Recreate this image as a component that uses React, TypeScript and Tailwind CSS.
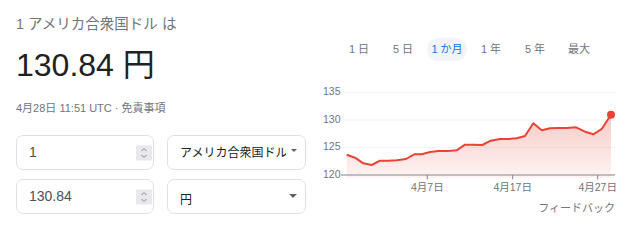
import React from "react";

const raw: [number, number][] = [
  [80, 224], [105, 233], [130, 250], [155, 255], [180, 242], [205, 242], [230, 241], [258, 237],
  [283, 223], [305, 223], [330, 216], [355, 213], [385, 213], [410, 211], [435, 194], [460, 194],
  [487, 195], [512, 182], [540, 177], [565, 177], [590, 175], [615, 168], [640, 130], [665, 151],
  [690, 145], [715, 144], [740, 144], [768, 142], [795, 155], [820, 163], [845, 147], [873, 104],
];
const pts = raw.map(([x, y]) => [x / 3, y / 3]);
const line = pts.map(([x, y], i) => `${i === 0 ? "M" : "L"}${x.toFixed(1)} ${y.toFixed(1)}`).join(" ");
const last = pts[pts.length - 1];
const fill = `${line} L${last[0].toFixed(1)} 98 L${pts[0][0].toFixed(1)} 98 Z`;

function Spinner() {
  return (
    <div className="absolute right-[1px] top-1/2 -translate-y-1/2 w-[16px] h-[15px] bg-[#e9e9ed] flex flex-col items-center justify-center">
      <svg width="8" height="13" viewBox="0 0 8 13">
        <path d="M1.5 4.5 L4 2 L6.5 4.5" fill="none" stroke="#8a8a8a" strokeWidth="1" />
        <path d="M1.5 8.5 L4 11 L6.5 8.5" fill="none" stroke="#8a8a8a" strokeWidth="1" />
      </svg>
    </div>
  );
}

function Tri({ w }: { w: number }) {
  return (
    <svg width={w} height={w / 2} viewBox="0 0 8 4">
      <path d="M0 0 L8 0 L4 4 Z" fill="#5f6368" />
    </svg>
  );
}

export default function App() {
  const tabs = ["1 日", "5 日", "1 か月", "1 年", "5 年", "最大"];
  return (
    <div className="w-[640px] h-[240px] bg-white flex font-['Liberation_Sans','Noto_Sans_CJK_JP',sans-serif] overflow-hidden">
      <div className="w-[320px] pl-4 pt-3 flex flex-col">
        <div className="h-6 leading-6 text-[14.5px] text-[#70757a] whitespace-nowrap">1 アメリカ合衆国ドル は</div>
        <div className="mt-[9px] h-10 leading-10 text-[32px] text-[#202124] whitespace-nowrap">130.84 円</div>
        <div className="mt-[15px] h-4 leading-4 text-[11px] text-[#70757a] whitespace-nowrap">4月28日 11:51 UTC · 免責事項</div>
        <div className="mt-[19px] grid grid-cols-[138px_139px] gap-x-[13px] gap-y-[9px]">
          <div className="relative h-[35px] border border-[#dfe1e5] rounded-[7px] flex items-center pl-3 text-[14px] text-[#4d5156]">
            1
            <Spinner />
          </div>
          <div className="relative h-[35px] border border-[#dfe1e5] rounded-[7px] flex items-center pl-3 pr-2 text-[12px] text-[#202124]">
            <span className="whitespace-nowrap overflow-hidden">アメリカ合衆国ドル</span>
            <span className="ml-[5px] -mt-[4px] shrink-0"><Tri w={6} /></span>
          </div>
          <div className="relative h-[35px] border border-[#dfe1e5] rounded-[7px] flex items-center pl-3 text-[14px] text-[#4d5156]">
            130.84
            <Spinner />
          </div>
          <div className="relative h-[35px] border border-[#dfe1e5] rounded-[7px] flex items-center justify-between pl-3 pr-2 text-[12px] text-[#202124]">
            <span className="pt-[6px]">円</span>
            <span className="-mt-[1px]"><Tri w={8} /></span>
          </div>
        </div>
      </div>
      <div className="w-[320px] flex flex-col">
        <div className="mt-[38px] ml-[17px] flex h-[23px]">
          {tabs.map((t) => (
            <div key={t} className="w-[44px] flex items-center justify-center">
              {t === "1 か月" ? (
                <span className="w-[40px] h-[23px] rounded-full bg-[#f1f4f9] flex items-center justify-center text-[11px] text-[#1a73e8] whitespace-nowrap">{t}</span>
              ) : (
                <span className="text-[11px] text-[#70757a] whitespace-nowrap">{t}</span>
              )}
            </div>
          ))}
        </div>
        <svg className="mt-[19px] block" width="300" height="120" viewBox="0 0 300 120">
          <defs>
            <linearGradient id="g" x1="0" y1="0" x2="0" y2="1" gradientUnits="objectBoundingBox">
              <stop offset="0" stopColor="#ea4335" stopOpacity="0.28" />
              <stop offset="1" stopColor="#ea4335" stopOpacity="0.06" />
            </linearGradient>
          </defs>
          {[12.5, 40, 67.5].map((y) => (
            <line key={y} x1="21" x2="295" y1={y} y2={y} stroke="#f1f3f4" strokeWidth="1" />
          ))}
          <path d={fill} fill="url(#g)" />
          <line x1="21" x2="295" y1="95" y2="95" stroke="#80868b" strokeWidth="1" />
          {[107.3, 192.7, 277.7].map((x) => (
            <line key={x} x1={x} x2={x} y1="95" y2="99.5" stroke="#80868b" strokeWidth="1" />
          ))}
          <path d={line} fill="none" stroke="#ea4335" strokeWidth="2" strokeLinejoin="round" />
          <circle cx={last[0]} cy={last[1]} r="4" fill="#ea4335" />
          {[["135", 12.5], ["130", 40], ["125", 67.5], ["120", 95]].map(([t, y]) => (
            <text key={t as string} x="3" y={y as number} dominantBaseline="middle" fontSize="10.5" fill="#70757a" fontFamily="Liberation Sans, Noto Sans CJK JP, sans-serif">{t}</text>
          ))}
          {[["4月7日", 107.3], ["4月17日", 192.7], ["4月27日", 277.7]].map(([t, x]) => (
            <text key={t as string} x={x as number} y="108" textAnchor="middle" dominantBaseline="middle" fontSize="10.5" fill="#70757a" fontFamily="Liberation Sans, Noto Sans CJK JP, sans-serif">{t}</text>
          ))}
        </svg>
        <div className="w-[295px] text-right h-4 leading-4 text-[11px] text-[#70757a] whitespace-nowrap">フィードバック</div>
      </div>
    </div>
  );
}
